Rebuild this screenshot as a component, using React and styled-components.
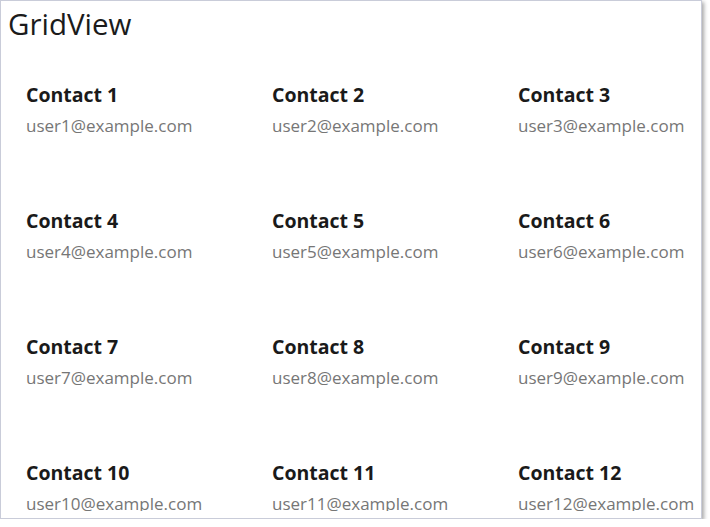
import React from "react";
import styled, { createGlobalStyle } from "styled-components";

const GlobalStyle = createGlobalStyle`
  html, body {
    margin: 0;
    padding: 0;
    background: #ffffff;
  }
  body {
    font-family: "Open Sans", "Noto Sans", sans-serif;
  }
`;

const Window = styled.div`
  box-sizing: border-box;
  width: 702px;
  height: 519px;
  border: 1px solid #c9ccd9;
  background: #ffffff;
  box-shadow: 2px 2px 4px rgba(0, 0, 0, 0.35);
  display: flex;
  flex-direction: column;
  overflow: hidden;
`;

const Title = styled.h1`
  margin: 0;
  padding: 3px 0 0 7px;
  font-size: 29.5px;
  font-weight: 400;
  line-height: 39px;
  color: #1b1b1b;
`;

const Scroller = styled.div`
  flex: 1;
  overflow: hidden;
  margin-bottom: 7px;
`;

const Grid = styled.div`
  display: grid;
  grid-template-columns: repeat(3, 246px);
  grid-auto-rows: 126px;
  padding: 39px 0 0 25px;
`;

const Card = styled.div`
  display: flex;
  flex-direction: column;
`;

const Name = styled.div`
  font-size: 19.5px;
  font-weight: 700;
  line-height: 26px;
  color: #1a1a1a;
`;

const Email = styled.div`
  font-size: 17px;
  line-height: 26px;
  color: #767676;
  margin-top: 5px;
`;

const contacts = Array.from({ length: 12 }, (_, i) => ({
  name: `Contact ${i + 1}`,
  email: `user${i + 1}@example.com`,
}));

export default function App() {
  return (
    <>
      <GlobalStyle />
      <Window>
        <Title>GridView</Title>
        <Scroller>
          <Grid>
            {contacts.map((c) => (
              <Card key={c.name}>
                <Name>{c.name}</Name>
                <Email>{c.email}</Email>
              </Card>
            ))}
          </Grid>
        </Scroller>
      </Window>
    </>
  );
}
